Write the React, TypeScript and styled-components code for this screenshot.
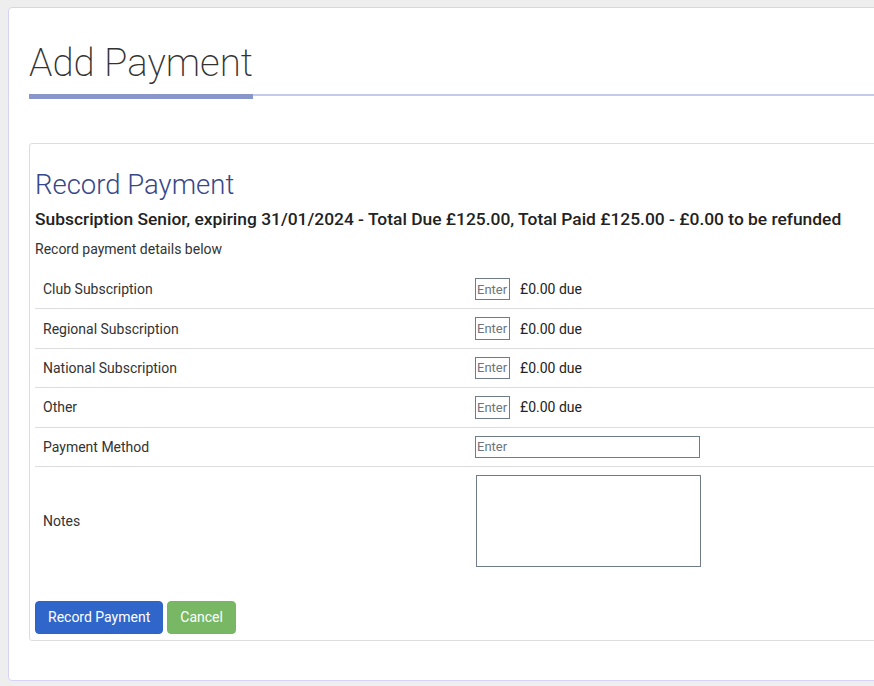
import React from "react";
import styled, { createGlobalStyle } from "styled-components";

const GlobalStyle = createGlobalStyle`
  html, body {
    margin: 0;
    padding: 0;
    background: #eeeeee;
    overflow: hidden;
  }
  body {
    padding: 7px 0 0 8px;
    font-family: Roboto, "Liberation Sans", sans-serif;
    color: #333;
  }
`;

const Panel = styled.div`
  width: 916px;
  background: #fff;
  border: 1px solid #d6d4f6;
  border-radius: 4px;
  padding: 31px 20px 39px 20px;
`;

const TitleRow = styled.div`
  display: flex;
  align-items: flex-start;
`;

const PageTitle = styled.h1`
  margin: 0;
  padding: 1px 0 9px 0;
  font-size: 38.5px;
  line-height: 45px;
  font-weight: 200;
  color: #333;
  border-bottom: 5px solid #8896cb;
`;

const TitleRule = styled.div`
  flex: 1;
  align-self: stretch;
  margin-bottom: 3px;
  border-bottom: 2px solid #c4caea;
`;

const Card = styled.div`
  margin-top: 44px;
  border: 1px solid #ddd;
  border-radius: 3px;
  padding: 5px 5px 6px 5px;
`;

const CardHeading = styled.h2`
  margin: 19px 0 0 0;
  font-size: 27.5px;
  line-height: 33px;
  font-weight: 300;
  color: #38478a;
`;

const Summary = styled.h3`
  margin: 6px 0 0 0;
  font-size: 17.4px;
  line-height: 24px;
  font-weight: 500;
  color: #222;
`;

const Intro = styled.p`
  margin: 8px 0 0 0;
  font-size: 14px;
  line-height: 20px;
  color: #333;
`;

const Table = styled.table`
  width: 864px;
  margin: 11px 0 26px 0;
  border-collapse: collapse;
  table-layout: fixed;
`;

const Row = styled.tr`
  & + & > td {
    border-top: 1px solid #ddd;
  }
`;

const Label = styled.td`
  width: 416px;
  padding: 8px;
  font-size: 14px;
  line-height: 20px;
  color: #333;
  vertical-align: middle;
`;

const Field = styled.td`
  padding: 8px;
  font-size: 14px;
  line-height: 20px;
  color: #222;
  vertical-align: middle;
`;

const FieldLine = styled.div`
  display: flex;
  align-items: center;
  gap: 10px;
`;

const Input = styled.input<{ $wide?: boolean }>`
  box-sizing: border-box;
  width: ${(p) => (p.$wide ? "225px" : "35px")};
  height: 22.4px;
  margin: 0;
  padding: 0 1px;
  border: 1px solid #6f7b88;
  border-radius: 0;
  font-family: Roboto, "Liberation Sans", sans-serif;
  font-size: 13px;
  color: #333;
  outline: none;
  &::placeholder {
    color: #6c757d;
  }
`;

const Notes = styled.textarea`
  display: block;
  box-sizing: border-box;
  width: 225px;
  height: 92px;
  margin: 0 0 0 1px;
  border: 1px solid #6f7b88;
  border-radius: 0;
  resize: none;
  font-family: Roboto, "Liberation Sans", sans-serif;
  font-size: 13px;
`;

const Due = styled.span`
  font-size: 14px;
  color: #222;
`;

const Actions = styled.div`
  display: flex;
  gap: 4px;
`;

const Button = styled.button<{ $variant: "primary" | "success" }>`
  height: 33px;
  padding: 0 12px;
  border: 1px solid
    ${(p) => (p.$variant === "primary" ? "#2e63c7" : "#74b662")};
  border-radius: 4px;
  background: ${(p) => (p.$variant === "primary" ? "#3066ca" : "#78b865")};
  color: #fff;
  font-family: Roboto, "Liberation Sans", sans-serif;
  font-size: 14px;
  cursor: pointer;
`;

const charges = [
  "Club Subscription",
  "Regional Subscription",
  "National Subscription",
  "Other",
];

const App = () => {
  return (
    <>
      <GlobalStyle />
      <Panel>
        <TitleRow>
          <PageTitle>Add Payment</PageTitle>
          <TitleRule />
        </TitleRow>
        <Card>
          <CardHeading>Record Payment</CardHeading>
          <Summary>
            Subscription Senior, expiring 31/01/2024 - Total Due £125.00, Total
            Paid £125.00 - £0.00 to be refunded
          </Summary>
          <Intro>Record payment details below</Intro>
          <Table>
            <tbody>
              {charges.map((c) => (
                <Row key={c}>
                  <Label>{c}</Label>
                  <Field>
                    <FieldLine>
                      <Input placeholder="Enter" />
                      <Due>£0.00 due</Due>
                    </FieldLine>
                  </Field>
                </Row>
              ))}
              <Row>
                <Label>Payment Method</Label>
                <Field>
                  <Input $wide placeholder="Enter" />
                </Field>
              </Row>
              <Row>
                <Label>Notes</Label>
                <Field>
                  <Notes />
                </Field>
              </Row>
            </tbody>
          </Table>
          <Actions>
            <Button $variant="primary">Record Payment</Button>
            <Button $variant="success">Cancel</Button>
          </Actions>
        </Card>
      </Panel>
    </>
  );
};

export default App;
